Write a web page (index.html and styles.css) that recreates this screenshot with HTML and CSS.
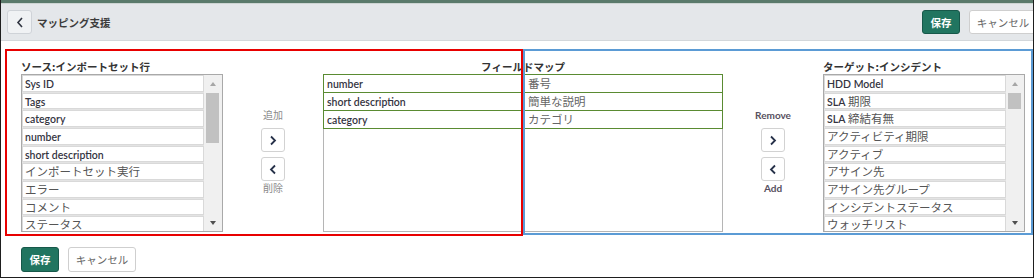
FILE: index.html
```html
<!DOCTYPE html>
<html lang="ja">
<head>
<meta charset="utf-8">
<title>マッピング支援</title>
<link rel="stylesheet" href="styles.css">
</head>
<body>
<div class="frame">
  <div class="topbar"></div>
  <header class="header">
    <button class="back" aria-label="戻る">
      <svg width="8" height="11" viewBox="0 0 8 11"><polyline points="6,1 2,5.5 6,10" fill="none" stroke="#2f3440" stroke-width="1.6"/></svg>
    </button>
    <h1 class="title">マッピング支援</h1>
    <div class="actions">
      <button class="btn primary">保存</button>
      <button class="btn cancel">キャンセル</button>
    </div>
  </header>

  <main class="mapper">
    <section class="col">
      <h2 class="coltitle">ソース:インポートセット行</h2>
      <div class="listbox">
        <ul class="rows">
          <li><span class="lat">Sys ID</span></li>
          <li><span class="lat">Tags</span></li>
          <li><span class="lat">category</span></li>
          <li><span class="lat">number</span></li>
          <li><span class="lat">short description</span></li>
          <li>インポートセット実行</li>
          <li>エラー</li>
          <li>コメント</li>
          <li>ステータス</li>
        </ul>
        <div class="scroll">
          <div class="sarrow"><span class="tri up"></span></div>
          <div class="thumb"></div>
          <div class="sarrow bottom"><span class="tri down"></span></div>
        </div>
      </div>
    </section>

    <div class="movers">
      <span class="mlabel">追加</span>
      <button class="move" aria-label="追加"><svg width="8" height="11" viewBox="0 0 8 11"><polyline points="2,1.5 6,5.5 2,9.5" fill="none" stroke="#27324a" stroke-width="1.8"/></svg></button>
      <button class="move" aria-label="削除"><svg width="8" height="11" viewBox="0 0 8 11"><polyline points="6,1.5 2,5.5 6,9.5" fill="none" stroke="#27324a" stroke-width="1.8"/></svg></button>
      <span class="mlabel">削除</span>
    </div>

    <section class="col map">
      <h2 class="coltitle center">フィールドマップ</h2>
      <div class="maplists">
        <ul class="maplist left">
          <li class="maprow"><span class="lat">number</span></li>
          <li class="maprow"><span class="lat">short description</span></li>
          <li class="maprow"><span class="lat">category</span></li>
        </ul>
        <ul class="maplist right">
          <li class="maprow">番号</li>
          <li class="maprow">簡単な説明</li>
          <li class="maprow">カテゴリ</li>
        </ul>
      </div>
    </section>

    <div class="movers">
      <span class="mlabel strong">Remove</span>
      <button class="move" aria-label="Remove"><svg width="8" height="11" viewBox="0 0 8 11"><polyline points="2,1.5 6,5.5 2,9.5" fill="none" stroke="#27324a" stroke-width="1.8"/></svg></button>
      <button class="move" aria-label="Add"><svg width="8" height="11" viewBox="0 0 8 11"><polyline points="6,1.5 2,5.5 6,9.5" fill="none" stroke="#27324a" stroke-width="1.8"/></svg></button>
      <span class="mlabel strong">Add</span>
    </div>

    <section class="col">
      <h2 class="coltitle">ターゲット:インシデント</h2>
      <div class="listbox">
        <ul class="rows">
          <li><span class="lat">HDD Model</span></li>
          <li><span class="lat">SLA</span> 期限</li>
          <li><span class="lat">SLA</span> 締結有無</li>
          <li>アクティビティ期限</li>
          <li>アクティブ</li>
          <li>アサイン先</li>
          <li>アサイン先グループ</li>
          <li>インシデントステータス</li>
          <li>ウォッチリスト</li>
        </ul>
        <div class="scroll">
          <div class="sarrow"><span class="tri up"></span></div>
          <div class="thumb short"></div>
          <div class="sarrow bottom"><span class="tri down"></span></div>
        </div>
      </div>
    </section>
  </main>

  <footer class="footer">
    <button class="btn primary tall">保存</button>
    <button class="btn cancel tall">キャンセル</button>
  </footer>

  <div class="annot red"></div>
  <div class="annot blue"></div>
</div>
</body>
</html>
```

FILE: styles.css
```css
* {
  box-sizing: border-box;
  margin: 0;
  padding: 0;
}

body {
  margin: 0;
  background: #fff;
  font-family: "Noto Sans CJK JP", "Lato", sans-serif;
}

.frame {
  position: relative;
  width: 1034px;
  height: 278px;
  border: 1px solid #1e1e1e;
  border-top: 0;
  overflow: hidden;
}

.topbar {
  height: 3px;
  background: #5a7a6b;
}

.header {
  height: 38px;
  display: flex;
  align-items: center;
  padding-left: 6px;
  background: #e4e7ea;
  border-top: 1px solid #cdd5d3;
  border-bottom: 1px solid #d3d7db;
}

.back {
  width: 25px;
  height: 24px;
  display: flex;
  align-items: center;
  justify-content: center;
  background: #f0f2f4;
  border: 1px solid #cfd3d8;
  border-radius: 3px;
}

.title {
  margin-left: 5px;
  font-size: 10.5px;
  font-weight: bold;
  color: #3c3c3c;
}

.actions {
  margin-left: auto;
  margin-right: -4px;
  display: flex;
  gap: 9px;
}

.btn {
  height: 24px;
  display: flex;
  align-items: center;
  justify-content: center;
  border: 1px solid #cfcfcf;
  border-radius: 3px;
  background: #fff;
  color: #666;
  font-family: "Noto Sans CJK JP", sans-serif;
  font-size: 10.5px;
}

.btn.tall {
  height: 25px;
}

.btn.primary {
  width: 38px;
  background: #217560;
  border-color: #17584a;
  color: #fff;
  font-weight: bold;
}

.btn.cancel {
  width: 68px;
}

.mapper {
  display: flex;
  gap: 38px;
  padding: 19px 0 0 20px;
}

.col {
  display: flex;
  flex-direction: column;
}

.coltitle {
  height: 14px;
  font-size: 10.5px;
  line-height: 14px;
  font-weight: bold;
  color: #333;
  white-space: nowrap;
}

.coltitle.center {
  text-align: center;
}

.listbox {
  width: 202px;
  height: 158px;
  display: flex;
  border: 1px solid #a9a9a9;
  background: #e3e3e3;
}

.rows {
  width: 182px;
  list-style: none;
  overflow: hidden;
}

.rows li {
  height: 16.67px;
  margin-bottom: 1px;
  padding-left: 2px;
  background: #fff;
  border: 1px solid #d9d9d9;
  font-size: 11.5px;
  line-height: 14.67px;
  color: #555;
  white-space: nowrap;
  overflow: hidden;
}

.lat {
  font-family: "Lato", sans-serif;
  font-size: 10.5px;
  font-weight: 600;
  color: #34343f;
}

.scroll {
  width: 18px;
  display: flex;
  flex-direction: column;
  background: #f0f0f0;
}

.sarrow {
  height: 17px;
  display: flex;
  align-items: center;
  justify-content: center;
}

.sarrow.bottom {
  margin-top: auto;
}

.tri {
  width: 0;
  height: 0;
  border-left: 3.5px solid transparent;
  border-right: 3.5px solid transparent;
}

.tri.up {
  border-bottom: 4px solid #a6a6a6;
}

.tri.down {
  border-top: 4px solid #505050;
}

.thumb {
  height: 50px;
  margin: 1px 3px 0 2px;
  background: #c1c1c1;
}

.thumb.short {
  height: 16px;
}

.movers {
  width: 24px;
  display: flex;
  flex-direction: column;
  align-items: center;
  padding-top: 48px;
}

.mlabel {
  font-size: 10px;
  line-height: 14px;
  color: #8a8a8a;
  white-space: nowrap;
}

.mlabel.strong {
  font-family: "Lato", sans-serif;
  font-weight: bold;
  color: #575060;
}

.mlabel:first-child {
  margin-bottom: 6px;
}

.move {
  width: 24px;
  height: 24px;
  display: flex;
  align-items: center;
  justify-content: center;
  background: #fff;
  border: 1px solid #d2d2d2;
  border-radius: 3px;
}

.move + .move {
  margin-top: 5px;
}

.map {
  width: 400px;
}

.maplists {
  display: flex;
  height: 158px;
}

.maplist {
  width: 200px;
  list-style: none;
  border-bottom: 1px solid #b5b5b5;
}

.maplist.left {
  border-left: 1px solid #b5b5b5;
}

.maplist.right {
  border-right: 1px solid #b5b5b5;
}

.maprow {
  height: 19px;
  margin-top: -1px;
  border: 1px solid #5a8b32;
  font-size: 11.5px;
  line-height: 17px;
  color: #666;
  white-space: nowrap;
}

.maprow:first-child {
  margin-top: 0;
}

.left .maprow {
  margin-left: -1px;
  padding-left: 3px;
}

.right .maprow {
  margin-right: -1px;
  padding-left: 4px;
}

.footer {
  display: flex;
  gap: 9px;
  padding: 15px 0 0 20px;
}

.annot {
  position: absolute;
  top: 49px;
  border: 2px solid;
  pointer-events: none;
}

.annot.red {
  left: 4px;
  width: 518px;
  height: 187px;
  border-color: #e80000;
}

.annot.blue {
  left: 522px;
  width: 510px;
  height: 186px;
  border-color: #5b9bd5;
}
```
